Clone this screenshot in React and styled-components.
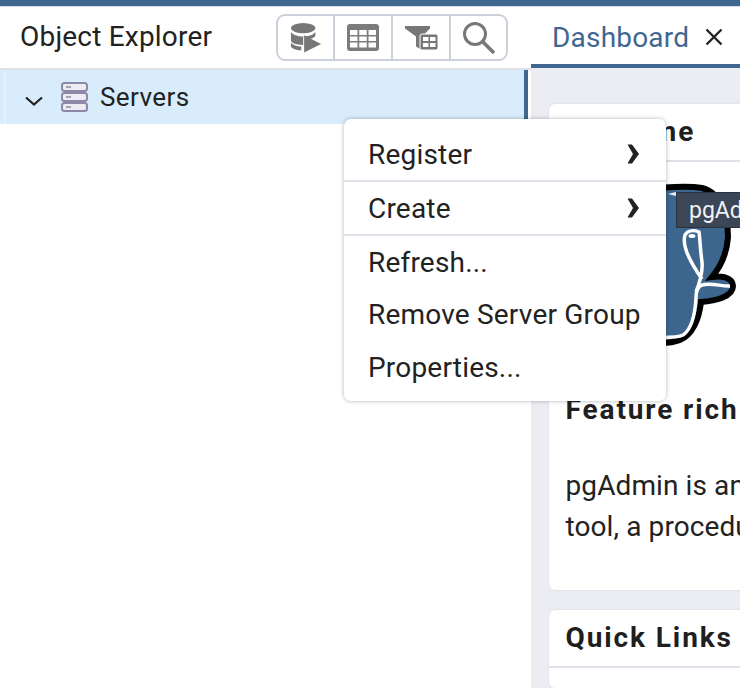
import React from 'react';
import styled, { createGlobalStyle } from 'styled-components';

const menuItems = [
  { label: 'Register', more: true, divider: true },
  { label: 'Create', more: true, divider: true },
  { label: 'Refresh...' },
  { label: 'Remove Server Group' },
  { label: 'Properties...' },
];

const DatabaseIcon = () => (
  <svg width="32" height="31" viewBox="0 0 34 32" fill="#777">
    <ellipse cx="14" cy="6" rx="13" ry="5.500" />
    <path d="M1 10c2 3.500 7 5 13 5s11-1.500 13-5v4.500c-2 2-4 3-6.500 3.500L14 14.500V24C7 24 1 22 1 19z" />
    <path d="M1 21.500C3 24 8 25.500 12 25.500V29.500C6 29.500 1 27.500 1 25z" />
    <path d="M15 13.500 33 23 15 32z" />
  </svg>
);

const TableIcon = () => (
  <svg width="32" height="27" viewBox="0 0 32 27">
    <rect width="32" height="27" rx="3" fill="#7c7c7c" />
    <g fill="#fff">
      <rect x="3" y="6" width="7.500" height="5" />
      <rect x="12.250" y="6" width="7.500" height="5" />
      <rect x="21.500" y="6" width="7.500" height="5" />
      <rect x="3" y="12.500" width="7.500" height="4.500" />
      <rect x="12.250" y="12.500" width="7.500" height="4.500" />
      <rect x="21.500" y="12.500" width="7.500" height="4.500" />
      <rect x="3" y="18.500" width="7.500" height="5" />
      <rect x="12.250" y="18.500" width="7.500" height="5" />
      <rect x="21.500" y="18.500" width="7.500" height="5" />
    </g>
  </svg>
);

const FilterIcon = () => (
  <svg width="33" height="24" viewBox="0 0 33 24">
    <path d="M0 0H25V2.500L17 10.500V24L11 20.500V10.500L0 2.500z" fill="#777" />
    <rect x="15" y="8" width="18" height="16" rx="2" fill="#777" stroke="#fff" />
    <g fill="#fff">
      <rect x="18" y="11" width="5.500" height="4" />
      <rect x="25" y="11" width="5.500" height="4" />
      <rect x="18" y="17" width="5.500" height="4" />
      <rect x="25" y="17" width="5.500" height="4" />
    </g>
  </svg>
);

const SearchIcon = () => (
  <svg width="34" height="34" viewBox="0 0 34 34" fill="none" stroke="#777">
    <circle cx="13" cy="13" r="10.500" strokeWidth="3" />
    <path d="M20.500 20.500 32 32" strokeWidth="3.500" />
  </svg>
);

const ServerIcon = () => (
  <svg width="28" height="30" viewBox="0 0 28 30" fill="#ececf2" stroke="#8b88a8" strokeWidth="2">
    <rect x="1" y="1" width="25" height="8" rx="2.500" />
    <rect x="1" y="11" width="25" height="8" rx="2.500" />
    <rect x="1" y="21" width="25" height="8" rx="2.500" />
    <path d="M5 5H10M5 15H10M5 25H10" strokeWidth="1.500" />
  </svg>
);

const Chevron = () => (
  <svg width="18" height="10" viewBox="0 0 18 10" fill="none" stroke="#222" strokeWidth="2.200">
    <path d="M1 1.500 9 8.500 17 1.500" />
  </svg>
);

const CloseIcon = () => (
  <svg width="18" height="18" viewBox="0 0 18 18" fill="none" stroke="#222" strokeWidth="2.400">
    <path d="M1.500 1.500 16.500 16.500M16.500 1.500 1.500 16.500" />
  </svg>
);

const Arrow = () => (
  <svg width="12" height="20" viewBox="0 0 12 20" fill="#222">
    <path d="M0.500 0.500H5L12 10 5 19.500H0.500L6 10z" />
  </svg>
);

const ElephantLogo = () => (
  <svg width="180" height="170" viewBox="560 180 180 170">
    <path
      d="M640 190C665 187 690 186 702 188C720 192 728 215 728 237C727 252 722 265 712 277C720 276 732 276 733 286C733 297 715 301 701 302C699 320 692 335 680 340C670 344 650 344 640 342z"
      fill="#3d668f"
      stroke="#000"
      strokeWidth="6"
    />
    <path d="M668 194 676 196 676 192z" fill="#e8edf2" />
    <path
      d="M640 337C655 337 675 339 683 335C692 329 695 315 696 298C696 292 697 287 702 285C712 282 722 287 730 286"
      fill="none"
      stroke="#fff"
      strokeWidth="3.500"
    />
    <path
      d="M696 292C700 282 703 272 702 262C700 248 700 238 699 232C694 230 688 230 685 235C682 245 690 262 702 279"
      fill="none"
      stroke="#fff"
      strokeWidth="3.500"
    />
    <ellipse cx="692" cy="236" rx="3.500" ry="2" fill="#fff" />
  </svg>
);

export default function App() {
  return (
    <>
      <GlobalStyle />
      <Page>
        <TopBar />
        <Body>
          <Explorer>
            <ExplorerHeader>
              <PanelTitle>Object Explorer</PanelTitle>
              <Toolbar>
                <ToolButton $width={57}><DatabaseIcon /></ToolButton>
                <ToolButton $width={58}><TableIcon /></ToolButton>
                <ToolButton $width={58}><FilterIcon /></ToolButton>
                <ToolButton $width={55}><SearchIcon /></ToolButton>
              </Toolbar>
            </ExplorerHeader>
            <TreeRow>
              <Chevron />
              <ServerIcon />
              <TreeLabel>Servers</TreeLabel>
            </TreeRow>
          </Explorer>
          <Main>
            <TabStrip>
              <Tab>
                <TabLabel>Dashboard</TabLabel>
                <CloseIcon />
              </Tab>
            </TabStrip>
            <Content>
              <Card $height={486}>
                <CardTitle>Welcome</CardTitle>
                <LogoBlock>
                  <ElephantLogo />
                </LogoBlock>
                <Feature>Feature rich | Maximises PostgreSQL | Open Source</Feature>
                <Paragraph>pgAdmin is an Open Source administration and management</Paragraph>
                <Paragraph>tool, a procedural code debugger and much more.</Paragraph>
              </Card>
              <Card $grow>
                <CardTitle>Quick Links</CardTitle>
              </Card>
            </Content>
          </Main>
        </Body>
        <ContextMenu>
          {menuItems.map(item => (
            <MenuItem key={item.label} $divider={item.divider}>
              {item.label}
              {item.more && <Arrow />}
            </MenuItem>
          ))}
        </ContextMenu>
        <Tooltip>pgAdmin</Tooltip>
      </Page>
    </>
  );
}

const GlobalStyle = createGlobalStyle`
  html, body {
    margin: 0;
    background: #fff;
  }

  body {
    font-family: Roboto, "Liberation Sans", sans-serif;
    color: #222;
  }
`;

const Page = styled.div`
  position: relative;
  width: 740px;
  height: 688px;
  overflow: hidden;
  display: flex;
  flex-direction: column;
`;

const TopBar = styled.div`
  height: 6px;
  background: #3f6790;
  border-bottom: 1px solid #d8dce4;
  flex: none;
`;

const Body = styled.div`
  flex: 1;
  display: flex;
  min-height: 0;
`;

const Explorer = styled.div`
  width: 531px;
  flex: none;
  background: #fff;
  padding-right: 3px;
  box-sizing: border-box;
`;

const ExplorerHeader = styled.div`
  height: 61px;
  display: flex;
  align-items: center;
  justify-content: space-between;
  padding: 0 23px 0 20px;
  margin-right: -3px;
  border-bottom: 2px solid #dfe1e8;
`;

const PanelTitle = styled.div`
  font-size: 28px;
  letter-spacing: 0.2px;
  margin-top: -2px;
`;

const Toolbar = styled.div`
  display: flex;
  height: 47px;
  border: 2px solid #ccd0da;
  border-radius: 9px;
  box-sizing: border-box;
`;

const ToolButton = styled.div`
  width: ${props => props.$width}px;
  box-sizing: border-box;
  display: flex;
  align-items: center;
  justify-content: center;
  border-right: 2px solid #ccd0da;

  &:last-child {
    border-right: none;
  }
`;

const TreeRow = styled.div`
  height: 54px;
  display: flex;
  align-items: center;
  gap: 18px;
  padding: 0 0 0 25px;
  background: linear-gradient(to right, #d9ecfb 4px, #e6f1f9 4px, #e6f1f9 6px, #d9ecfb 6px);
  border-right: 4px solid #3f6790;
  box-sizing: border-box;

  > svg:first-child {
    margin-top: 8px;
  }
`;

const TreeLabel = styled.div`
  font-size: 26px;
  letter-spacing: 0.4px;
  margin-left: -7px;
  margin-top: -1px;
`;

const Main = styled.div`
  flex: 1;
  min-width: 0;
  display: flex;
  flex-direction: column;
`;

const TabStrip = styled.div`
  height: 57px;
  flex: none;
  border-bottom: 4px solid #3f6790;
  display: flex;
  padding-left: 21px;
`;

const Tab = styled.div`
  display: flex;
  align-items: center;
  gap: 16px;
  padding-top: 3px;
`;

const TabLabel = styled.div`
  font-size: 28px;
  letter-spacing: 0.2px;
  color: #3f6790;
`;

const Content = styled.div`
  flex: 1;
  background: #ebedf3;
  padding: 36px 0 0 18px;
  display: flex;
  flex-direction: column;
  gap: 20px;
  min-height: 0;
`;

const Card = styled.div`
  background: #fff;
  border-radius: 6px 0 0 6px;
  box-shadow: 0 0 2px rgba(0, 0, 0, 0.12);
  height: ${props => (props.$height ? `${props.$height}px` : 'auto')};
  flex: ${props => (props.$grow ? 1 : 'none')};
  overflow: hidden;
`;

const CardTitle = styled.div`
  height: 56px;
  line-height: 56px;
  padding-left: 16.500px;
  font-size: 28px;
  font-weight: 700;
  letter-spacing: 1.9px;
  border-bottom: 2px solid #dfe1e8;
  color: #1f1f1f;
`;

const LogoBlock = styled.div`
  height: 170px;
  margin: 18px 0 0 11px;
`;

const Feature = styled.div`
  margin: 44px 0 0 16.500px;
  font-size: 28px;
  font-weight: 700;
  letter-spacing: 1.9px;
  white-space: nowrap;
  color: #1f1f1f;
  line-height: 32px;
`;

const Paragraph = styled.div`
  font-size: 28px;
  letter-spacing: 0.1px;
  line-height: 41px;
  padding-left: 16.500px;
  white-space: nowrap;

  ${Feature} + & {
    margin-top: 39px;
  }
`;

const ContextMenu = styled.div`
  position: absolute;
  left: 344px;
  top: 119px;
  width: 322px;
  height: 282px;
  background: #fff;
  border-radius: 7px;
  box-shadow: 0 0 4px rgba(0, 0, 0, 0.3);
  box-sizing: border-box;
  padding-top: 9px;
`;

const MenuItem = styled.div`
  height: ${props => (props.$divider ? '54px' : '52.500px')};
  display: flex;
  align-items: center;
  justify-content: space-between;
  padding: 0 27px 0 24px;
  font-size: 28px;
  letter-spacing: 0.2px;
  white-space: nowrap;
  box-sizing: border-box;
  border-bottom: ${props => (props.$divider ? '2px solid #dfe1e8' : 'none')};
`;

const Tooltip = styled.div`
  position: absolute;
  left: 676px;
  top: 192px;
  width: 100px;
  height: 36px;
  padding-left: 12px;
  box-sizing: border-box;
  background: #3b4656;
  border: 1px solid #2b3340;
  color: #f0f2f5;
  font-size: 23px;
  line-height: 36px;
  white-space: nowrap;
  overflow: hidden;
`;
